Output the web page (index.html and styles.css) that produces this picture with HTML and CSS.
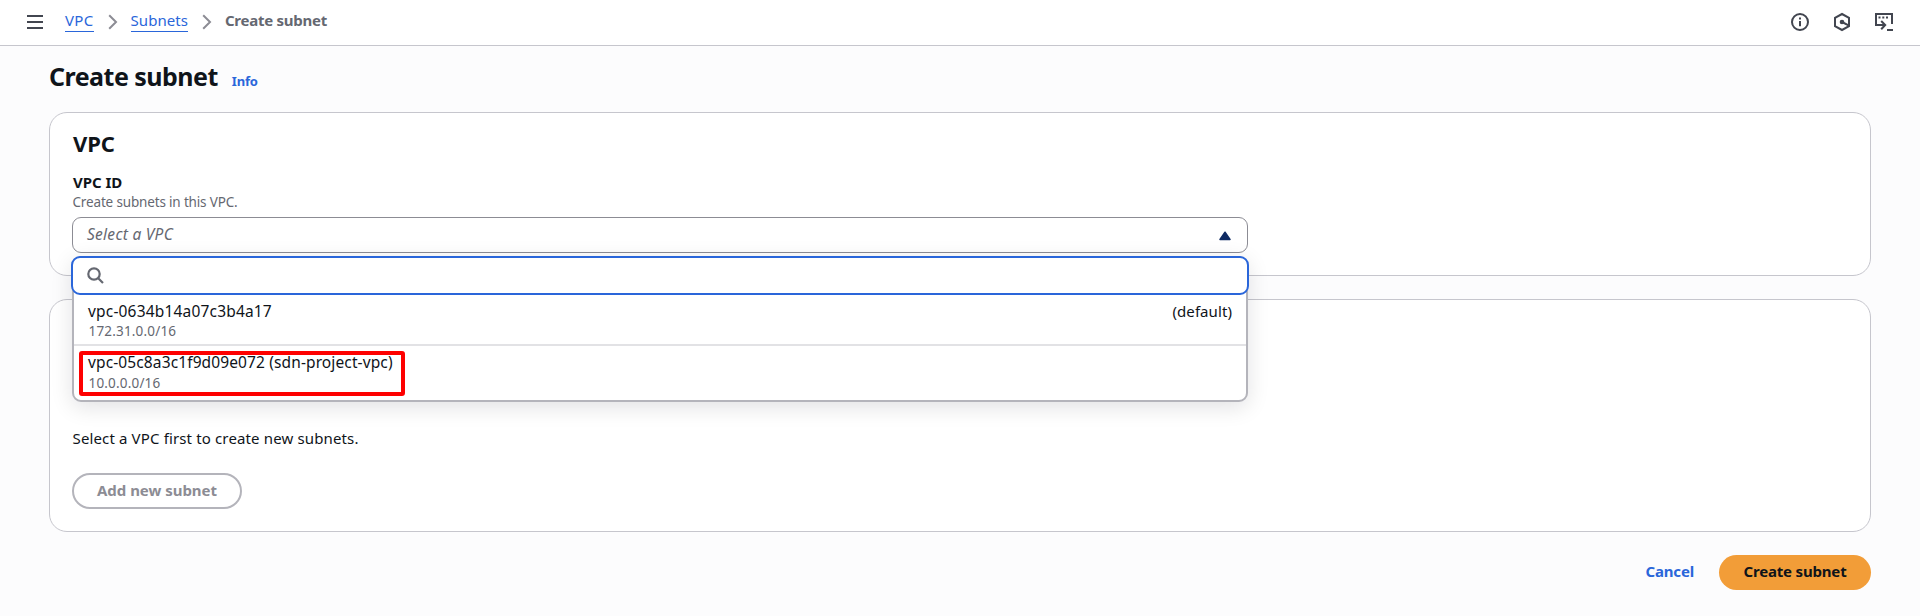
FILE: index.html
```
<!DOCTYPE html>
<html lang="en">
<head>
<meta charset="utf-8">
<title>Create subnet | VPC</title>
<link rel="stylesheet" href="styles.css">
</head>
<body>
<header class="topbar">
  <svg class="menu" width="16" height="16" viewBox="0 0 16 16"><path d="M0 2h16M0 8h16M0 14h16"/></svg>
  <nav class="crumbs">
    <a class="crumb crumb-vpc" href="#">VPC</a>
    <svg class="chevron" width="10" height="16" viewBox="0 0 10 16"><path d="M1.200 1.300 8 8l-6.800 6.700"/></svg>
    <a class="crumb" href="#">Subnets</a>
    <svg class="chevron" width="10" height="16" viewBox="0 0 10 16"><path d="M1.200 1.300 8 8l-6.800 6.700"/></svg>
    <span class="crumb-current">Create subnet</span>
  </nav>
  <div class="tools">
    <svg width="20" height="20" viewBox="0 0 20 20"><circle cx="10" cy="10" r="8"/><path d="M10 9v5.200"/><path d="M9 6.500h2"/></svg>
    <svg width="20" height="20" viewBox="0 0 20 20"><path d="M10 2l7 3.800v8.400L10 18l-7-3.800V5.800z"/><circle class="dot" cx="10" cy="10" r="2.300"/><path d="M10 10l6.500 3.300"/></svg>
    <svg width="20" height="20" viewBox="0 0 20 20"><path d="M6 13H2V2h16v10M5 13h5M7.200 9l4 4-4 4.300M13 18h6"/><path d="M4.500 5.500h2M8.300 5.500h2M12 5.500h2"/></svg>
  </div>
</header>
<main class="page">
  <div class="page-head">
    <h1>Create subnet</h1>
    <a class="info" href="#">Info</a>
  </div>
  <section class="card">
    <h2>VPC</h2>
    <div class="label">VPC ID</div>
    <div class="hint">Create subnets in this VPC.</div>
    <div class="field">
      <div class="select">
        <span class="placeholder">Select a VPC</span>
        <svg width="12" height="10" viewBox="0 0 12 10"><path d="M6 1.200 11 8.500H1z"/></svg>
      </div>
      <div class="dropdown">
        <div class="search">
          <svg width="17" height="17" viewBox="0 0 17 17"><circle cx="7" cy="7" r="5.700"/><path d="M11.200 11.200 16 16"/></svg>
        </div>
        <ul class="options">
          <li class="option">
            <div class="option-row"><span class="option-title">vpc-0634b14a07c3b4a17</span><span class="tag">(default)</span></div>
            <div class="option-sub">172.31.0.0/16</div>
          </li>
          <li class="option option-last">
            <div class="option-row"><span class="option-title option-title-long">vpc-05c8a3c1f9d09e072 (sdn-project-vpc)</span></div>
            <div class="option-sub">10.0.0.0/16</div>
            <div class="highlight"></div>
          </li>
        </ul>
      </div>
    </div>
  </section>
  <section class="card subnets">
    <p class="message">Select a VPC first to create new subnets.</p>
    <button class="btn btn-add" disabled>Add new subnet</button>
  </section>
  <div class="actions">
    <a class="cancel" href="#">Cancel</a>
    <button class="btn btn-primary">Create subnet</button>
  </div>
</main>
</body>
</html>
```
FILE: styles.css
```
* { box-sizing: border-box; }
body {
  margin: 0;
  height: 616px;
  background: #fcfcfd;
  color: #0f141a;
  font: 15px/20px "Noto Sans", "Open Sans", sans-serif;
}
h1, h2, p, ul { margin: 0; padding: 0; }
a { color: #2a66da; text-decoration: none; }
svg { display: block; fill: none; flex: none; }

.topbar {
  height: 46px;
  padding: 0 26px 1px 27px;
  display: flex;
  align-items: center;
  background: #fff;
  border-bottom: 1px solid #c6c6cd;
}
.menu { stroke: #424650; stroke-width: 2; }
.crumbs { display: flex; align-items: flex-start; height: 22px; margin-left: 22px; }
.crumb { height: 21px; line-height: 18px; border-bottom: 1px solid #2a66da; letter-spacing: .06px; }
.crumb-vpc { letter-spacing: .31px; }
.chevron { stroke: #8c8c94; stroke-width: 2; margin: 3px 13px 0 14px; }
.crumb-current { color: #656871; font-weight: 700; line-height: 18px; letter-spacing: -.26px; }
.tools { margin-left: auto; display: flex; gap: 22px; }
.tools svg { stroke: #424650; stroke-width: 2; }
.tools .dot { fill: #424650; stroke: none; }

.page { padding: 15px 49px 0; }
.page-head { display: flex; align-items: baseline; height: 30px; margin-bottom: 21px; }
h1 { font-size: 25px; line-height: 30px; letter-spacing: -.52px; }
.info { margin-left: 14px; font-size: 13px; font-weight: 700; letter-spacing: -.2px; }

.card {
  height: 164px;
  padding: 16px 22px 0;
  background: #fff;
  border: 1px solid #c6c6cd;
  border-radius: 18px;
}
h2 { font-size: 22px; line-height: 28px; letter-spacing: -.1px; margin-bottom: 15px; padding-left: 1px; }
.label { font-size: 15px; font-weight: 700; letter-spacing: -.02px; padding-left: 1px; }
.hint { font-size: 13.5px; color: #656871; letter-spacing: -.16px; margin-bottom: 5px; padding-left: .5px; }
.field { position: relative; width: 1176px; }
.select {
  height: 36px;
  padding: 0 16px 0 14px;
  display: flex;
  align-items: center;
  justify-content: space-between;
  background: #fff;
  border: 1px solid #8c8c94;
  border-radius: 9px;
}
.placeholder { color: #656871; font-size: 15.5px; font-style: italic; letter-spacing: .27px; padding-bottom: 2px; }
.select svg { fill: #0f2b63; stroke: #0f2b63; stroke-width: 1.500; stroke-linejoin: round; margin-top: 1px; }

.dropdown {
  position: absolute;
  z-index: 2;
  top: 39px;
  left: 0;
  right: 0;
  height: 146px;
  background: #fff;
  border: 2px solid #b4b4bb;
  border-radius: 9px;
  box-shadow: 0 5px 22px rgba(0, 7, 22, .12);
}
.search {
  height: 39px;
  margin: -2px -3px 0;
  padding-left: 14px;
  display: flex;
  align-items: center;
  background: #fff;
  border: 2px solid #2a66da;
  border-radius: 9px;
}
.search svg { stroke: #656871; stroke-width: 2.200; }
.options { list-style: none; }
.option { position: relative; height: 51px; padding: 6px 14px 0; border-bottom: 2px solid #e2e2e5; }
.option-last { border: 0; height: 56px; }
.option-row { display: flex; justify-content: space-between; margin-bottom: 1px; }
.option-last .option-row { margin-bottom: 2px; }
.option-title { font-size: 15.5px; letter-spacing: .18px; }
.option-title-long { letter-spacing: .12px; }
.tag { letter-spacing: .08px; }
.option-sub { font-size: 13.5px; line-height: 18px; color: #656871; letter-spacing: .18px; padding-left: .5px; }
.highlight {
  position: absolute;
  left: 5px;
  top: 5px;
  width: 326px;
  height: 45px;
  border: 4px solid #fe0000;
  border-radius: 3px;
}

.subnets { height: 233px; margin-top: 23px; padding-top: 128px; }
.message { letter-spacing: .14px; margin-bottom: 25px; padding-left: .5px; }
.btn {
  height: 36px;
  padding: 0 0 2px;
  font: 700 15px/20px "Noto Sans", "Open Sans", sans-serif;
  border-radius: 18px;
}
.btn-add { display: block; width: 170px; color: #8c8c94; background: #fff; border: 2px solid #b4b4bb; letter-spacing: -.03px; }
.actions { display: flex; align-items: center; justify-content: flex-end; gap: 25px; margin-top: 23px; height: 35px; }
.cancel { font-weight: 700; letter-spacing: -.17px; padding-bottom: 3px; }
.btn-primary { width: 152px; height: 35px; padding-bottom: 3px; border: 0; background: #f29d38; color: #0f141a; letter-spacing: -.18px; }
```
